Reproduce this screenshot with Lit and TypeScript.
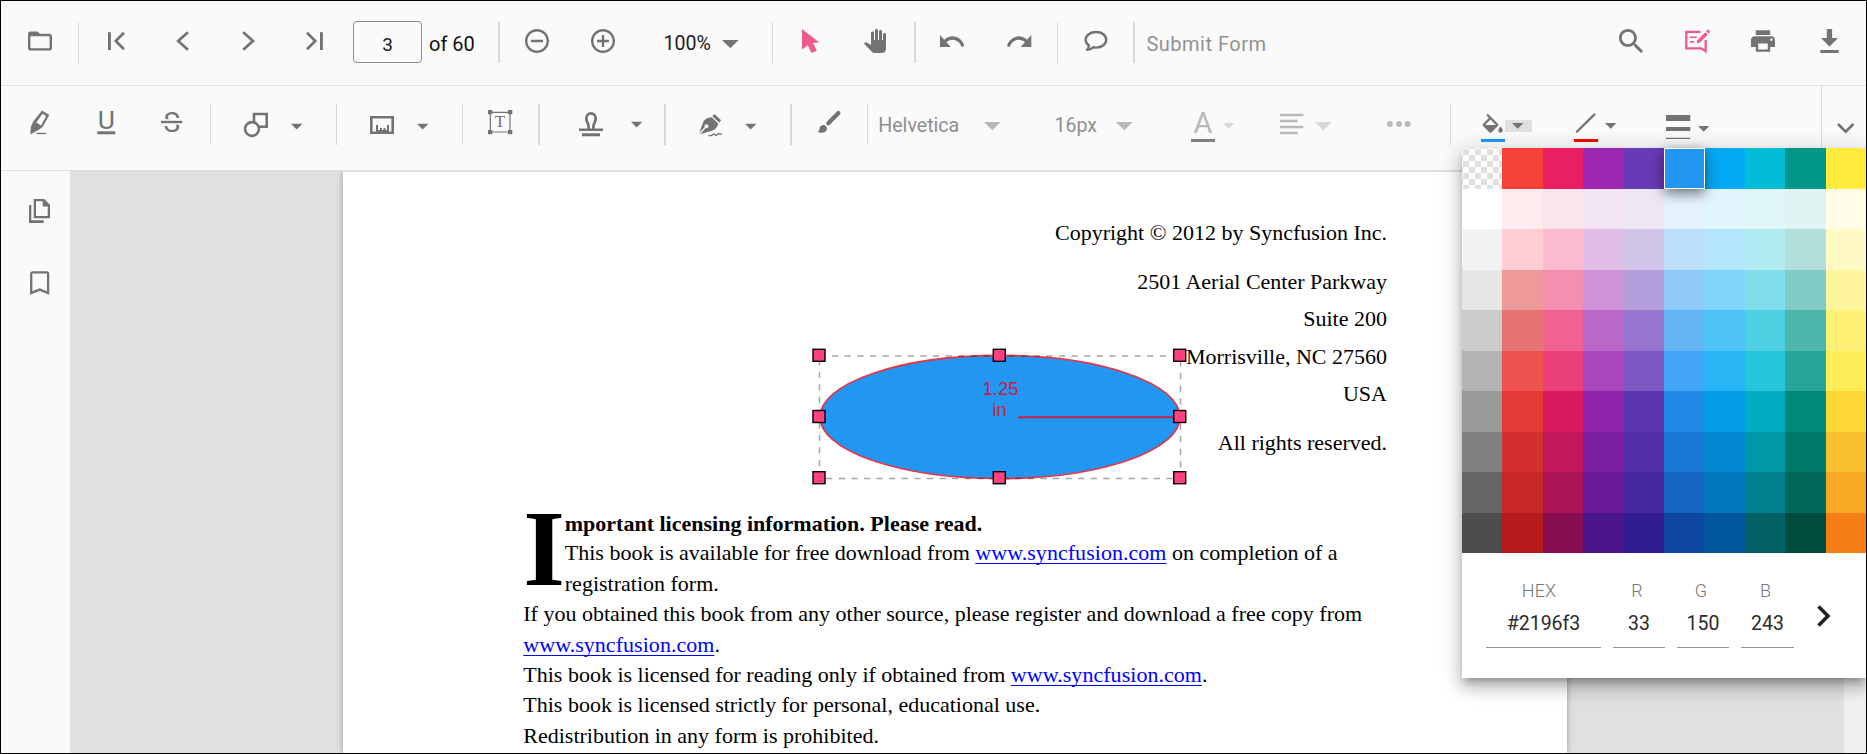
import { LitElement, html, svg, css } from "lit";
import { customElement } from "lit/decorators.js";
import { classMap } from "lit/directives/class-map.js";

const PALETTE: string[][] = [
  ["", "#f44336", "#e91e63", "#9c27b0", "#673ab7", "#2196f3", "#03a9f4", "#00bcd4", "#009688", "#ffeb3b"],
  ["#ffffff", "#ffebee", "#fce4ec", "#f3e5f5", "#ede7f6", "#e3f2fd", "#e1f5fe", "#e0f7fa", "#e0f2f1", "#fffde7"],
  ["#f2f2f2", "#ffcdd2", "#f8bbd0", "#e1bee7", "#d1c4e9", "#bbdefb", "#b3e5fc", "#b2ebf2", "#b2dfdb", "#fff9c4"],
  ["#e6e6e6", "#ef9a9a", "#f48fb1", "#ce93d8", "#b39ddb", "#90caf9", "#81d4fa", "#80deea", "#80cbc4", "#fff59d"],
  ["#cccccc", "#e57373", "#f06292", "#ba68c8", "#9575cd", "#64b5f6", "#4fc3f7", "#4dd0e1", "#4db6ac", "#fff176"],
  ["#b3b3b3", "#ef5350", "#ec407a", "#ab47bc", "#7e57c2", "#42a5f5", "#29b6f6", "#26c6da", "#26a69a", "#ffee58"],
  ["#999999", "#e53935", "#d81b60", "#8e24aa", "#5e35b1", "#1e88e5", "#039be5", "#00acc1", "#00897b", "#fdd835"],
  ["#808080", "#d32f2f", "#c2185b", "#7b1fa2", "#512da8", "#1976d2", "#0288d1", "#0097a7", "#00796b", "#fbc02d"],
  ["#666666", "#c62828", "#ad1457", "#6a1b9a", "#4527a0", "#1565c0", "#0277bd", "#00838f", "#00695c", "#f9a825"],
  ["#4d4d4d", "#b71c1c", "#880e4f", "#4a148c", "#311b92", "#0d47a1", "#01579b", "#006064", "#004d40", "#f57f17"],
];
const SELECTED = "#2196f3";

/* Material glyphs live on a 24 unit grid with a 2 unit safe area. */
const material = (d: string, box = "2 2 20 20") =>
  html`<svg width="24" height="24" viewBox=${box}><path fill="currentColor" d=${d}></path></svg>`;

const art = (w: number, h: number, body: unknown) =>
  html`<svg width=${w} height=${h} viewBox="0 0 ${w} ${h}" fill="none" stroke="none">${body}</svg>`;

const caret = (y: number) =>
  art(12, 32, svg`<path fill="currentColor" d="M0 ${y}h11.4L5.7 ${y + 5.8}z"/>`);
const wideCaret = (y: number) =>
  art(17, 32, svg`<path fill="currentColor" d="M0 ${y}h16.6L8.3 ${y + 8.2}z"/>`);

const ICONS = {
  folder: material("M20 6h-8l-2-2H4c-1.1 0-1.99.9-1.99 2L2 18c0 1.1.9 2 2 2h16c1.1 0 2-.9 2-2V8c0-1.1-.9-2-2-2zm0 12H4V8h16v10z"),
  first: art(18, 24, svg`<path fill="currentColor" d="M0 3.2h2.9v17.8H0z"/><path stroke="currentColor" stroke-width="2.7" d="M16 3.8L7.8 12l8.2 8.2"/>`),
  prev: art(14, 24, svg`<path stroke="currentColor" stroke-width="2.7" d="M12 3.3L2.2 12l9.8 8.7"/>`),
  next: art(14, 24, svg`<path stroke="currentColor" stroke-width="2.7" d="M1.2 3.3L11 12l-9.8 8.7"/>`),
  last: art(18, 24, svg`<path fill="currentColor" d="M14 3.2h2.9v17.8H14z"/><path stroke="currentColor" stroke-width="2.7" d="M1 3.8L9.2 12 1 20.2"/>`),
  zoomOut: material("M7 11v2h10v-2H7zm5-9C6.48 2 2 6.48 2 12s4.48 10 10 10 10-4.48 10-10S17.52 2 12 2zm0 18c-4.41 0-8-3.59-8-8s3.59-8 8-8 8 3.59 8 8-3.59 8-8 8z"),
  zoomIn: material("M13 7h-2v4H7v2h4v4h2v-4h4v-2h-4V7zm-1-5C6.48 2 2 6.48 2 12s4.48 10 10 10 10-4.48 10-10S17.52 2 12 2zm0 18c-4.41 0-8-3.59-8-8s3.59-8 8-8 8 3.59 8 8-3.59 8-8 8z"),
  pointer: art(18, 24, svg`<path fill="currentColor" d="M0 0L17 13.2l-6 .9 3.9 7.6-5.4 2.3-3.8-7.8L0 20.6z"/>`),
  hand: material("M23 5.5V20c0 2.2-1.8 4-4 4h-7.3c-1.08 0-2.1-.43-2.85-1.19L1 14.83s1.26-1.23 1.3-1.25c.22-.19.49-.29.79-.29.22 0 .42.06.6.16.04.01 4.31 2.46 4.31 2.46V4c0-.83.67-1.5 1.5-1.5S11 3.17 11 4v7h1V1.5c0-.83.67-1.5 1.5-1.5S15 .67 15 1.5V11h1V2.5c0-.83.67-1.5 1.5-1.5s1.5.67 1.5 1.5V11h1V5.5c0-.83.67-1.5 1.5-1.5s1.5.67 1.5 1.5z", "1 0 24 24"),
  undo: art(25, 24, svg`<path fill="currentColor" transform="translate(-2.4 -3.2) scale(1.19 1.32)" d="M12.5 8c-2.65 0-5.05.99-6.9 2.6L2 7v9h9l-3.62-3.62c1.39-1.16 3.16-1.88 5.12-1.88 3.54 0 6.55 2.31 7.6 5.5l2.37-.78C21.08 11.03 17.15 8 12.5 8z"/>`),
  redo: art(25, 24, svg`<path fill="currentColor" transform="translate(26.7 -3.2) scale(-1.19 1.32)" d="M12.5 8c-2.65 0-5.05.99-6.9 2.6L2 7v9h9l-3.62-3.62c1.39-1.16 3.16-1.88 5.12-1.88 3.54 0 6.55 2.31 7.6 5.5l2.37-.78C21.08 11.03 17.15 8 12.5 8z"/>`),
  comment: art(24, 24, svg`<path stroke="currentColor" stroke-width="2.4" stroke-linejoin="round" d="M12.2 3C6.4 3 1.6 6.4 1.6 10.7c0 2.3 1.3 4.3 3.3 5.7.1 1.8-.6 3.2-1.9 4.4 2.6.2 4.7-.8 6.2-2.5 1 .2 1.9.3 3 .3 5.8 0 10-3.5 10-7.9S18 3 12.2 3z"/>`),
  search: material("M15.5 14h-.79l-.28-.27C15.41 12.59 16 11.11 16 9.5 16 5.91 13.09 3 9.5 3S3 5.91 3 9.5 5.91 16 9.5 16c1.61 0 3.09-.59 4.23-1.57l.27.28v.79l5 4.99L20.49 19l-4.99-5zm-6 0C7.01 14 5 11.99 5 9.5S7.01 5 9.5 5 14 7.01 14 9.5 11.99 14 9.5 14z", "3 3 17.5 17.5"),
  annotate: art(26, 24, svg`<path stroke="currentColor" stroke-width="2.3" d="M15.5 2.9H1.3V19.3h15.2l4.2 3V11"/><path stroke="currentColor" stroke-width="1.5" d="M4.8 8.3h7M4.8 12.7h4.6"/><path fill="currentColor" d="M12.3 11.2L20.4 3.2l2.5 2.5-8 7.9-3.2.6z"/><path stroke="currentColor" stroke-width="2.6" d="M21.9 1.2l2.5 2.5"/>`),
  print: material("M19 8H5c-1.66 0-3 1.34-3 3v6h4v4h12v-4h4v-6c0-1.66-1.34-3-3-3zm-3 11H8v-5h8v5zm3-7c-.55 0-1-.45-1-1s.45-1 1-1 1 .45 1 1-.45 1-1 1zm-1-9H6v4h12V3z"),
  download: art(19, 24, svg`<path fill="currentColor" d="M6.8 0h5.3v9H18L9.5 17.6 1 9h5.8zM.4 21h18.3v3H.4z"/>`),

  highlight: art(20, 32, svg`<path fill="currentColor" fill-rule="evenodd" d="M12 .4L19.3 5 12.9 16.5 9.3 19.4 .2 24.4 .9 16.8 3.3 11.5zM12.5 3.7L6.3 12.6l4.8 2.9L16.1 6.1z"/><path stroke="currentColor" stroke-width="1.4" d="M6.5 23.5H16"/>`),
  underline: art(19, 32, svg`<path fill="currentColor" d="M.3 21.3h17.9v3H.3z"/><text class="glyph" x="9.3" y="19" font-size="26.5" text-anchor="middle">U</text>`),
  strike: art(22, 32, svg`<text class="glyph" x="10.8" y="22.3" font-size="28" text-anchor="middle">S</text><path fill="#fafafa" d="M0 9.2h22v5.6H0z"/><path fill="currentColor" d="M0 10.8h21.3v2.4H0z"/>`),
  shapes: art(24, 32, svg`<path stroke="currentColor" stroke-width="2.6" d="M10 4h12.7v12.7H10z"/><circle cx="8" cy="19" r="6.9" fill="#fafafa" stroke="currentColor" stroke-width="2.6"/>`),
  measure: art(24, 32, svg`<path stroke="currentColor" stroke-width="2.6" d="M1.3 7.3h21.4v15.4H1.3z"/><path fill="currentColor" d="M6 15h2v5h2v-2h2v2h1.5v-2h2v2H17v-5h2v7H6z"/>`),
  textBox: art(25, 32, svg`<path stroke="currentColor" stroke-width="1.2" d="M2.3 2.3h19.7v19.7H2.3z"/><path fill="currentColor" d="M0 0h4.3v4.3H0zM20 0h4.3v4.3H20zM0 20h4.3v4.3H0zM20 20h4.3v4.3H20z"/><text class="serif" x="11.9" y="16.5" font-size="17" text-anchor="middle">T</text>`),
  stamp: art(24, 32, svg`<path fill="currentColor" d="M0 18.5h24v2.6H0zM3 23.3h18v2.9H3z"/><path stroke="currentColor" stroke-width="2.7" d="M9.6 19v-2.8c0-2.4-2.3-4.5-2.3-7.7 0-2.9 2-5.1 4.7-5.1s4.7 2.2 4.7 5.1c0 3.2-2.3 5.3-2.3 7.7V19"/>`),
  sign: art(24, 32, svg`<path fill="currentColor" d="M13.4 6.2l2-2.1 6.7 6.2-2 2.3z"/><path fill="currentColor" fill-rule="evenodd" d="M12.6 7.3l6.6 6.2c-1 4.5-3.5 6.8-8 7.8L1 24.3l5.8-6.2a2 2 0 1 0-1.1-1L.2 22.9 4 12.6c1.6-3.6 4.5-4.8 8.6-5.3z"/><path stroke="currentColor" stroke-width="1.3" d="M9.5 25.3c2.5 1.6 3.8-.3 5.3-1.4 1.3-.5 1 2.3 2.6 1.4 1.4-.8 1.8-2.8 3-1.5.8.8 1.6.4 2.4-.3"/>`),
  brush: art(24, 32, svg`<path stroke="currentColor" stroke-width="4.2" stroke-linecap="round" d="M11.3 13.2L21.4 3"/><path fill="currentColor" d="M.3 21.7c2-.4 2-1.7 2.2-3.2.3-2.2 2-3.6 4-3.5 2.3.1 3.6 1.8 3.5 3.9-.3 3.2-5.4 5.3-9.7 2.8z"/>`),
  fontColor: art(24, 32, svg`<text class="glyph" x="12" y="23.3" font-size="29" text-anchor="middle">A</text><path fill="#808080" d="M0 29h24v3H0z"/>`),
  align: art(24, 32, svg`<path stroke="currentColor" stroke-width="2.3" d="M0 5h23.3M0 11h17.6M0 17h23.3M0 23h17.6"/>`),
  more: art(24, 32, svg`<g fill="currentColor"><circle cx="3" cy="14" r="2.9"/><circle cx="12" cy="14" r="2.9"/><circle cx="20.7" cy="14" r="2.9"/></g>`),
  fill: art(24, 32, svg`<path fill="currentColor" transform="translate(-1.7 3.7) scale(1.12)" d="M16.56 8.94L7.62 0 6.21 1.41l2.38 2.38-5.15 5.15c-.59.59-.59 1.54 0 2.12l5.5 5.5c.29.29.68.44 1.06.44s.77-.15 1.06-.44l5.5-5.5c.59-.58.59-1.53 0-2.12zM5.21 10L10 5.21 14.79 10H5.21zM19 11.5s-2 2.17-2 3.5c0 1.1.9 2 2 2s2-.9 2-2c0-1.33-2-3.5-2-3.5z"/><path fill="#2196f3" d="M0 29h24v3H0z"/>`),
  stroke: art(24, 32, svg`<path stroke="currentColor" stroke-width="2.3" d="M2.3 22.3L21 3.9"/><path fill="#f00" d="M0 29h24v3H0z"/>`),
  thickness: art(25, 32, svg`<path fill="currentColor" d="M0 5h24.3v6H0zM0 17h24.3v4H0zM0 27.7h24.3v1.3H0z"/>`),
  collapse: art(18, 32, svg`<path stroke="currentColor" stroke-width="2.7" d="M1 14l7.7 7.6L16.4 14"/>`),

  pages: art(22, 24, svg`<path fill="currentColor" fill-rule="evenodd" d="M4.7 0h10.6L21 5.7v13.6H4.7zM7 2.3v14.7h11.7V7.6h-5V2.3z"/><path fill="currentColor" d="M0 6h2.3v15.3H14.7V24H0z"/>`),
  bookmark: art(20, 24, svg`<path stroke="currentColor" stroke-width="2.3" d="M1.2 22.1V2.8c0-.9.7-1.5 1.5-1.5h13.9c.9 0 1.5.7 1.5 1.5v19.3l-8.4-3.5z"/>`),
  chevron: art(14, 22, svg`<path stroke="currentColor" stroke-width="3.6" d="M1.5 1.4L11 11l-9.5 9.6"/>`),
};

@customElement("main-toolbar")
class MainToolbar extends LitElement {
  static styles = css`
    :host { display: block; color: #737373; }
    .bar {
      display: grid; height: 85px; padding-left: 26.5px; box-sizing: border-box;
      grid-template-columns:
        50px 30.2px 68px 66px 64.2px 47.1px 76px 69.5px 26.8px 66px
        72.2px 58.2px 50px 30px 62.3px 50.3px 26px 66.7px 49.7px 27px
        49.6px 12.7px 473.3px 65.9px 66.1px 68.7px 46px;
      border-bottom: 1px solid #e0e0e0;
    }
    .bar > * { margin-top: 28px; justify-self: start; }
    svg { display: block; overflow: visible; }
    .bar > .sep { margin-top: 21px; width: 1.5px; height: 41px; background: #d9d9d9; }
    .bar > .text { margin-top: 30px; font: 19.6px/26px Roboto, sans-serif; color: #212121; white-space: nowrap; }
    .bar > .count { color: #111; font-size: 20px; }
    .bar > .muted { color: #919191; font-size: 20px; letter-spacing: .5px; padding-left: .5px; }
    .bar > .input {
      box-sizing: border-box; margin-top: 20px; width: 69px; height: 42px; border: 1px solid #8a8a8a; border-radius: 4px;
      background: #fafafa; text-align: center; font: 19px/45px Roboto, sans-serif; color: #212121;
    }
    .accent { color: #ee5a8a; }
  `;
  render() {
    const sep = html`<span class="sep"></span>`;
    return html`<div class="bar">
      <span>${ICONS.folder}</span>${sep}
      <span>${ICONS.first}</span><span>${ICONS.prev}</span><span>${ICONS.next}</span><span>${ICONS.last}</span>
      <span class="input">3</span><span class="text count">of 60</span>${sep}
      <span>${ICONS.zoomOut}</span><span>${ICONS.zoomIn}</span>
      <span class="text">100%</span><span>${wideCaret(11)}</span>${sep}
      <span class="accent">${ICONS.pointer}</span><span>${ICONS.hand}</span>${sep}
      <span>${ICONS.undo}</span><span>${ICONS.redo}</span>${sep}
      <span>${ICONS.comment}</span>${sep}
      <span class="text muted">Submit Form</span>
      <span>${ICONS.search}</span><span class="accent">${ICONS.annotate}</span>
      <span>${ICONS.print}</span><span>${ICONS.download}</span>
    </div>`;
  }
}

@customElement("annotation-toolbar")
class AnnotationToolbar extends LitElement {
  static styles = css`
    :host { display: block; color: #737373; }
    .bar {
      display: grid; height: 84px; padding-left: 29px; box-sizing: content-box;
      grid-template-columns:
        66.5px 64.5px 48.5px 34.5px 47px 44.5px 34.5px 46.5px 45px 26.5px
        50.3px 40.7px 52px 33.3px 34.7px 46.3px 45px 27px 49.3px 11.7px
        105.7px 70.5px 61.5px 75px 32px 56.7px 35.6px 71.4px 63.5px 30.8px
        24px 69px 31.3px 61px 32px 122.7px 15.7px 1fr;
      border-bottom: 1px solid #dcdcdc;
    }
    .bar > * { margin-top: 24px; justify-self: start; }
    svg { display: block; overflow: visible; }
    .bar > .sep { margin-top: 18px; width: 1.3px; height: 41px; background: #d9d9d9; }
    .bar > .full { margin-top: 0; width: 1.6px; height: 84px; background: #d9d9d9; }
    .bar > .text { margin-top: 25px; font: 19.6px/29px Roboto, sans-serif; color: #8f8f8f; white-space: nowrap; }
    .dim { color: #b8b8b8; }
    .faint { color: #d8d8d8; }
    .bar > .open { margin-top: 34px; width: 27px; height: 12px; background: #e0e0e0; display: flex; justify-content: center; overflow: hidden; }
    .open svg { margin-top: -10px; flex: none; }
    .glyph { font-family: Roboto, sans-serif; fill: currentColor; }
    .serif { font-family: "Liberation Serif", serif; fill: currentColor; }
  `;
  render() {
    const sep = html`<span class="sep"></span>`;
    return html`<div class="bar">
      <span>${ICONS.highlight}</span><span>${ICONS.underline}</span><span>${ICONS.strike}</span>${sep}
      <span>${ICONS.shapes}</span><span>${caret(13.8)}</span>${sep}
      <span>${ICONS.measure}</span><span>${caret(13.8)}</span>${sep}
      <span>${ICONS.textBox}</span>${sep}
      <span>${ICONS.stamp}</span><span>${caret(11.8)}</span>${sep}
      <span>${ICONS.sign}</span><span>${caret(13.8)}</span>${sep}
      <span>${ICONS.brush}</span>${sep}
      <span class="text">Helvetica</span><span class="dim">${wideCaret(12)}</span>
      <span class="text">16px</span><span class="dim">${wideCaret(12)}</span>
      <span class="dim">${ICONS.fontColor}</span><span class="faint">${caret(13)}</span>
      <span class="dim">${ICONS.align}</span><span class="faint">${wideCaret(12)}</span>
      <span class="dim">${ICONS.more}</span>${sep}
      <span>${ICONS.fill}</span><span class="open">${caret(13)}</span>
      <span>${ICONS.stroke}</span><span>${caret(13)}</span>
      <span>${ICONS.thickness}</span><span>${caret(16)}</span>
      <span class="full"></span><span>${ICONS.collapse}</span>
    </div>`;
  }
}

@customElement("color-popup")
class ColorPopup extends LitElement {
  static styles = css`
    :host {
      display: block; background: #fff; font-family: Roboto, sans-serif;
      box-shadow: 0 6px 7px -3px rgba(0, 0, 0, .25), 0 10px 13px 1px rgba(0, 0, 0, .16), 0 4px 22px 3px rgba(0, 0, 0, .14);
    }
    .palette { display: grid; grid-template-columns: repeat(10, 1fr); grid-auto-rows: 40.5px; }
    .none { background: repeating-conic-gradient(#fff 0 25%, #e0e0e0 0 50%) 1px 1px / 12px 12px; }
    .selected { position: relative; margin-right: -.6px; border: 1px solid #fff; box-shadow: 0 4px 12px rgba(0, 0, 0, .55); }
    .values { display: grid; grid-template-columns: 115px 52px 52px 53px 14px; column-gap: 12px; padding: 26px 0 0 24px; }
    .field { display: flex; flex-direction: column; text-align: center; border-bottom: 1.5px solid #949494; height: 67.5px; }
    .label { font-size: 18px; line-height: 24px; color: #757575; font-weight: 300; padding-right: 4px; letter-spacing: .2px; }
    .wide .label { padding-right: 9px; }
    .value { font-size: 19.5px; line-height: 24px; margin-top: 8.5px; color: #2b2b2b; }
    .more { color: #212121; margin: 26px 0 0 10.5px; }
    svg { display: block; }
  `;
  render() {
    const fields = [["HEX", "#2196f3"], ["R", "33"], ["G", "150"], ["B", "243"]];
    return html`
      <div class="palette">
        ${PALETTE.flat().map((c) => html`<span class=${classMap({ none: !c, selected: c === SELECTED })} style=${c ? `background:${c}` : ""}></span>`)}
      </div>
      <div class="values">
        ${fields.map(([l, v]) => html`<div class=${classMap({ field: true, wide: l === "HEX" })}><span class="label">${l}</span><span class="value">${v}</span></div>`)}
        <span class="more">${ICONS.chevron}</span>
      </div>`;
  }
}

@customElement("document-page")
class DocumentPage extends LitElement {
  static styles = css`
    :host {
      display: block; position: relative; box-sizing: border-box; background: #fff; color: #000;
      padding: 42px 180px 0 180.3px; font: 22px/37.3px "Liberation Serif", "Times New Roman", serif; white-space: nowrap;
      box-shadow: 0 0 6px rgba(0, 0, 0, .32);
    }
    p { margin: 0; }
    .imprint { text-align: right; }
    .gap { margin-top: 11.8px; }
    .lead { display: grid; grid-template-columns: 41.5px 1fr; height: 88px; margin-top: 50px; }
    .cap { font-size: 107px; line-height: 80px; font-weight: bold; margin-top: -2.5px; }
    .title { font-weight: bold; line-height: 26px; }
    .intro { line-height: 31px; }
    .body { line-height: 30.3px; }
    a { color: #0000ff; text-decoration: underline; text-decoration-thickness: 1px; text-underline-offset: 3px; text-decoration-skip-ink: none; letter-spacing: .04px; }
    .overlay { position: absolute; left: 0; top: 0; }
    .measure { font-family: "Liberation Sans", Arial, sans-serif; font-size: 18.5px; fill: #c62340; text-anchor: middle; }
  `;
  render() {
    const link = html`<a>www.syncfusion.com</a>`;
    const handles = [[819, 355.3], [999.3, 355.3], [1179.7, 355.3], [819, 416.5], [1179.7, 416.5], [819, 477.7], [999.3, 477.7], [1179.7, 477.7]];
    return html`
      <div class="imprint">
        <p>Copyright © 2012 by Syncfusion Inc.</p>
        <p class="gap">2501 Aerial Center Parkway</p>
        <p>Suite 200</p><p>Morrisville, NC 27560</p><p>USA</p>
        <p class="gap">All rights reserved.</p>
      </div>
      <div class="lead">
        <span class="cap">I</span>
        <div>
          <p class="title">mportant licensing information. Please read.</p>
          <p class="intro">This book is available for free download from ${link} on completion of a<br />registration form.</p>
        </div>
      </div>
      <div class="body">
        <p>If you obtained this book from any other source, please register and download a free copy from<br />${link}.</p>
        <p>This book is licensed for reading only if obtained from ${link}.</p>
        <p>This book is licensed strictly for personal, educational use.</p>
        <p>Redistribution in any form is prohibited.</p>
      </div>
      <svg class="overlay" width="1224" height="581" viewBox="343 172 1224 581">
        <ellipse cx="1000" cy="417" rx="180" ry="61.5" fill="#2196f3" stroke="#e0384a" stroke-width="1.8"></ellipse>
        <path d="M1018 417.3H1180" stroke="#c62340" stroke-width="2"></path>
        <text class="measure" x="1000.5" y="395">1.25</text>
        <text class="measure" x="999.7" y="416">in</text>
        <path fill="none" stroke="#000" stroke-opacity=".35" stroke-width="1.5" stroke-dasharray="6.3 6.3" d="M819.5 356H1180.5V478.5H819.5z"></path>
        ${handles.map(([x, y]) => svg`<rect x=${x - 6} y=${y - 6} width="12" height="12" fill="#ff4081" stroke="#000" stroke-width="1.4"/>`)}
      </svg>`;
  }
}

@customElement("app-root")
class AppRoot extends LitElement {
  static styles = css`
    :host { display: block; }
    .frame {
      position: relative; box-sizing: border-box; width: 1867px; height: 754px; overflow: hidden;
      border: 1px solid #000; background: #fafafa; display: flex; flex-direction: column;
    }
    .work { flex: 1; min-height: 0; display: grid; grid-template-columns: 69px 1fr 22px; }
    .side { color: #737373; padding: 28px 0 0 28px; display: flex; flex-direction: column; gap: 48px; }
    .side svg { display: block; }
    .side svg + svg { margin-left: 1px; }
    .viewer { background: #e0e0e0; border-top: 1px solid #e0e0e0; padding-left: 273px; overflow: hidden; }
    .sheet { width: 1224px; height: 581px; }
    .scroll { background: #f0f0f0; }
    .popup { position: absolute; left: 1461px; top: 147px; width: 404px; height: 530px; }
  `;
  render() {
    return html`<div class="frame">
      <main-toolbar></main-toolbar>
      <annotation-toolbar></annotation-toolbar>
      <div class="work">
        <div class="side">${ICONS.pages}${ICONS.bookmark}</div>
        <div class="viewer"><document-page class="sheet"></document-page></div>
        <div class="scroll"></div>
      </div>
      <color-popup class="popup"></color-popup>
    </div>`;
  }
}
